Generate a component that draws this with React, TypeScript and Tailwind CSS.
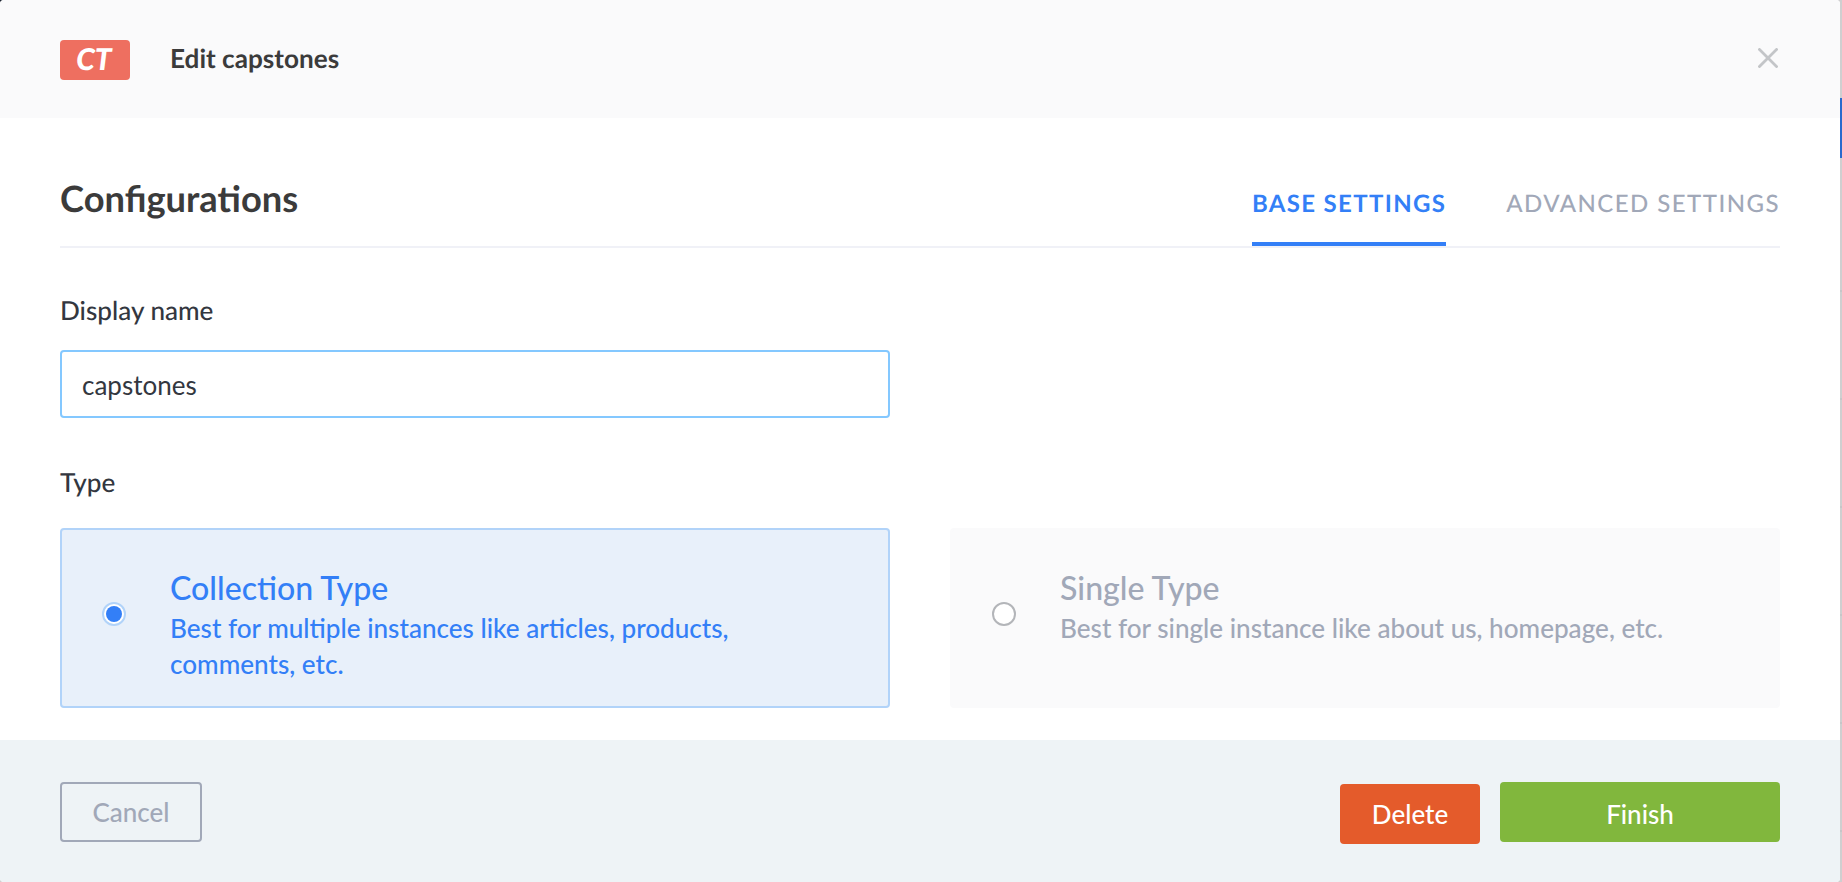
import React from "react";

type TypeCardProps = {
  title: string;
  description: string;
  selected?: boolean;
};

function TypeCard({ title, description, selected = false }: TypeCardProps) {
  return (
    <button
      type="button"
      className={
        selected
          ? "flex h-[180px] w-[830px] items-start rounded-[4px] border-2 border-[#b1d3f9] bg-[#e8f0fa] pl-10 text-left text-[#337ff7]"
          : "flex h-[180px] w-[830px] items-start rounded-[4px] border-2 border-[#fafafb] bg-[#fafafb] pl-10 text-left text-[#a1a8b8]"
      }
    >
      <span
        className={
          selected
            ? "mt-[72px] flex size-6 shrink-0 items-center justify-center rounded-full border-2 border-[#b1d3f9] bg-white"
            : "mt-[72px] flex size-6 shrink-0 items-center justify-center rounded-full border-2 border-[#b3b5b9] bg-white"
        }
      >
        {selected && <span className="size-4 rounded-full bg-[#337ff7]" />}
      </span>
      <span className="ml-11 mt-[38px] block">
        <span className="block text-[32.1px] font-medium leading-[40px] whitespace-nowrap">{title}</span>
        <span className="mt-0.5 block w-[610px] text-[26.1px] font-medium leading-[36px]">{description}</span>
      </span>
    </button>
  );
}

const ROW_LINES = ["a", "b", "c", "d", "e", "f"];

/** Sliver of the dimmed page that shows beside the dialog. */
function PageEdge() {
  return (
    <div className="flex w-0.5 flex-col bg-[#cfcfd0]">
      <div className="mt-[98px] h-[60px] shrink-0 bg-[#2a6acd]" />
      <div className="mt-[132px] flex flex-col gap-[106px]">
        {ROW_LINES.map((id) => (
          <div key={id} className="h-0.5 shrink-0 bg-[#c6c6c8]" />
        ))}
      </div>
    </div>
  );
}

export default function App() {
  return (
    <div className="flex h-[882px] w-[1842px] overflow-hidden bg-[radial-gradient(circle_at_top_left,#1c2330_6px,#cfcfd0_6px)] font-[Lato,sans-serif] [text-rendering:geometricPrecision]">
      <div className="flex w-[1840px] flex-col overflow-hidden rounded-[4px] bg-white">
        <header className="flex h-[118px] items-start bg-[#fafafb] px-[60px] pt-10">
          <div className="flex h-10 w-[70px] justify-center rounded-[4px] bg-[#ee6f60] pr-0.5 text-[30px] font-black italic leading-[38px] text-white">
            CT
          </div>
          <h1 className="ml-10 text-[26.15px] font-bold leading-[36px] text-[#3b3b3b]">Edit capstones</h1>
          <button type="button" aria-label="Close" className="ml-auto mt-2">
            <svg className="mr-0.5 size-5" viewBox="0 0 20 20" fill="none" stroke="#c3c5c8" strokeWidth="2.8">
              <path d="M0.5 0.5 19.5 19.5M19.5 0.5 0.5 19.5" />
            </svg>
          </button>
        </header>

        <main className="h-[622px] px-[60px]">
          <div className="flex h-[130px] justify-between border-b-2 border-[#f0f1f7]">
            <h2 className="pt-[56px] text-[36.3px] font-bold leading-[48px] text-[#3b3b3b]">Configurations</h2>
            <nav className="flex gap-[60px] pt-[70px] text-[24px] leading-[32px] tracking-[1.45px]">
              <span className="h-[58px] border-b-4 border-[#337ff7] font-bold tracking-[1.33px] text-[#337ff7]">
                BASE SETTINGS
              </span>
              <span className="font-medium text-[#a1a8b8]">ADVANCED SETTINGS</span>
            </nav>
          </div>

          <label className="mt-[45px] block text-[26.1px] font-medium leading-[34px] text-[#333740]">Display name</label>
          <input
            className="mt-[23px] block h-[68px] w-[830px] rounded-[4px] border-2 border-[#84c8ff] bg-white px-5 pt-0.5 text-[26px] text-[#333740] outline-none"
            defaultValue="capstones"
          />

          <p className="mt-[47px] text-[26.1px] font-medium leading-[34px] text-[#333740]">Type</p>
          <div className="mt-[29px] flex justify-between">
            <TypeCard
              selected
              title="Collection Type"
              description="Best for multiple instances like articles, products, comments, etc."
            />
            <TypeCard title="Single Type" description="Best for single instance like about us, homepage, etc." />
          </div>
        </main>

        <footer className="flex h-[142px] items-start bg-[#eef3f6] px-[60px] pt-[42px] text-[26px] font-medium">
          <button type="button" className="h-[60px] w-[142px] rounded-[4px] border-2 border-[#a1a8b8] text-[#a1a8b8]">
            Cancel
          </button>
          <button type="button" className="ml-auto mt-0.5 h-[60px] w-[140px] rounded-[4px] bg-[#e45b2b] text-white">
            Delete
          </button>
          <button type="button" className="ml-5 h-[60px] w-[280px] rounded-[4px] bg-[#81b73d] pt-1 text-white">
            Finish
          </button>
        </footer>
      </div>
      <PageEdge />
    </div>
  );
}
